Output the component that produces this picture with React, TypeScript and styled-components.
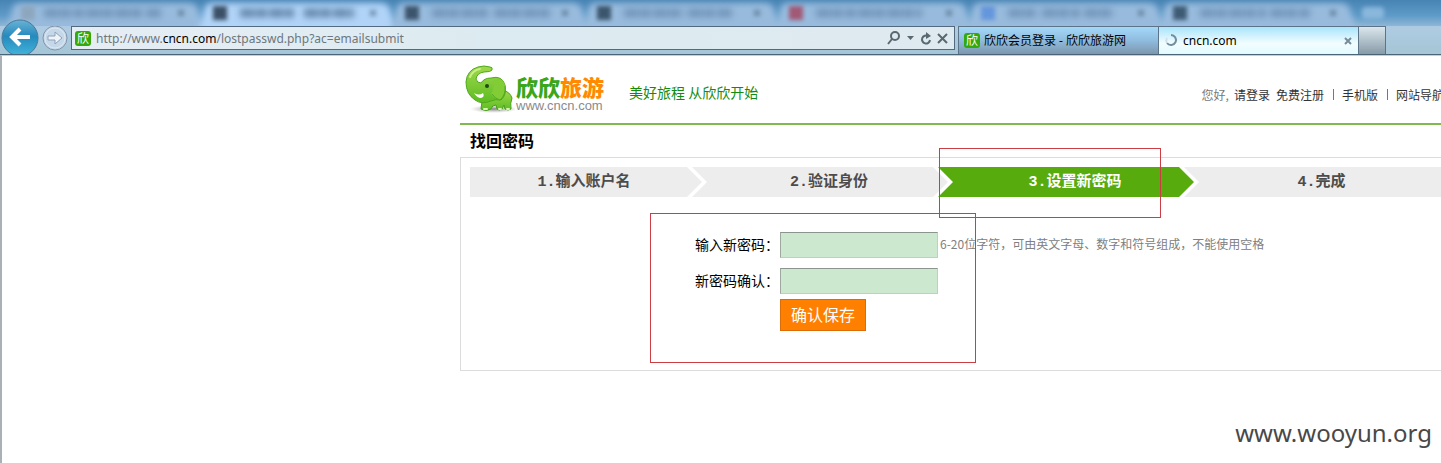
import React from "react";
import styled, { createGlobalStyle } from "styled-components";

const GlobalStyle = createGlobalStyle`
  *, *::before, *::after { box-sizing: border-box; }
  body {
    margin: 0;
    background: #fff;
    color: #000;
    font-family: "Noto Sans CJK SC", sans-serif;
    font-size: 14px;
  }
  button, input { font: inherit; }
  a { color: inherit; text-decoration: none; }
`;

const Screen = styled.div`
  display: flex;
  flex-direction: column;
  min-height: 100vh;
  overflow: hidden;
`;

/* ---------- browser chrome ---------- */

const Chrome = styled.header`
  background: linear-gradient(
    180deg,
    #5b8fba 0,
    #8fb6da 8px,
    #a3c2e2 20px,
    #aecbe3 28px,
    #a5c6d6 54px
  );
  border-bottom: 1px solid #4b6478;
`;

const WindowStrip = styled.div`
  display: flex;
  height: 26px;
  padding-left: 10px;
  overflow: hidden;
  background: linear-gradient(180deg, #4784b4, #5f9bc8 60%, #8fb6d6);
`;

const GhostTab = styled.svg`
  flex: 0 0 192px;
  height: 34px;
  overflow: visible;
`;

const NewGhostTab = styled.svg`
  flex: 1;
  height: 26px;
`;

const Toolbar = styled.div`
  display: flex;
  align-items: flex-start;
  height: 28px;
`;

const BackButton = styled.button`
  position: relative;
  flex: none;
  width: 38px;
  height: 35px;
  margin: -7px 3px 0 1px;
  padding: 0;
  border: 0;
  background: none;
  overflow: hidden;
`;

const ForwardButton = styled.button`
  flex: none;
  width: 26px;
  height: 26px;
  margin-right: 3px;
  padding: 0;
  border: 0;
  background: none;
`;

const AddressBar = styled.div`
  display: flex;
  flex: 1;
  align-items: center;
  height: 24px;
  margin-right: 3px;
  padding: 0 4px 0 3px;
  border: 1px solid #53697f;
  background: linear-gradient(90deg, #e6edf4, #dcebf1 50%, #dfeaf0);
`;

const Url = styled.div`
  flex: 1;
  margin-left: 5px;
  padding-top: 2px;
  color: #6d777d;
  font: 12px/20px "Noto Sans", sans-serif;
  white-space: nowrap;
  outline: 0;
`;

const Domain = styled.span`
  color: #000;
`;

const BarButton = styled.button<{ $width: number }>`
  display: flex;
  align-items: center;
  justify-content: center;
  width: ${(p) => p.$width}px;
  height: 20px;
  padding: 0;
  border: 0;
  background: none;
`;

const Tabs = styled.nav`
  display: flex;
  height: 28px;
  margin-right: 55px;
`;

const Tab = styled.div<{ $active?: boolean }>`
  display: flex;
  align-items: center;
  width: 200px;
  padding: 0 5px;
  border: 1px solid #5d7488;
  border-width: 1px 0 0 1px;
  background: ${(p) =>
    p.$active
      ? "linear-gradient(180deg, #a8e4fb, #f2fdff 60%, #e2fbff)"
      : "linear-gradient(180deg, #a4d8f8, #8fbcdf 50%, #7d97ac)"};
  font: 12px/20px "Noto Sans", "Noto Sans CJK SC", sans-serif;
`;

const TabLabel = styled.a`
  flex: 1;
  margin-left: 4px;
  white-space: nowrap;
`;

const NewTab = styled.button`
  width: 28px;
  padding: 0;
  border: 1px solid #5d7488;
  border-bottom: 0;
  background: linear-gradient(180deg, #dbe6ec, #869ba8);
`;

const SiteIcon = styled.span`
  flex: none;
  width: 16px;
  height: 15px;
  border-radius: 3px;
  background: #35a80c;
  color: #fff;
  font: 12px/14px "Noto Sans CJK SC", sans-serif;
  text-align: center;
`;

/* ---------- web page ---------- */

const Viewport = styled.div`
  flex: 1;
  padding-left: 458px;
  border-top: 1px solid #d8c5d6;
  border-left: 2px solid #a9b0b6;
`;

const SiteHeader = styled.div`
  display: flex;
  align-items: center;
  height: 69px;
  border-bottom: 2px solid #82b94f;
`;

const Brand = styled.a`
  display: flex;
  align-items: center;
  margin-left: 5px;
`;

const BrandText = styled.span`
  display: flex;
  flex-direction: column;
  margin-left: 1px;
  padding-top: 12px;
`;

const BrandName = styled.span`
  color: #3aa618;
  font-size: 22px;
  font-weight: 900;
  line-height: 20px;
`;

const Orange = styled.span`
  color: #ff8a00;
`;

const BrandUrl = styled.span`
  color: #8a8a8a;
  font: 13px/20px "Liberation Sans", sans-serif;
`;

const Slogan = styled.span`
  margin-left: 25px;
  padding-top: 4px;
  color: #118c11;
  line-height: 20px;
`;

const TopNav = styled.nav`
  display: flex;
  align-items: center;
  margin: 10px -3px 0 auto;
  color: #333;
  font-size: 12px;
  line-height: 20px;
  white-space: nowrap;
`;

const Greeting = styled.span`
  color: #777;
  margin-right: 5px;
`;

const NavLink = styled.a`
  & + & {
    margin-left: 6px;
  }
`;

const Divider = styled.span`
  width: 1px;
  height: 11px;
  margin: 0 8px 0 9px;
  background: #777;
`;

const PageTitle = styled.h1`
  margin: 0 0 0 10px;
  padding-bottom: 2px;
  font-size: 16px;
  font-weight: 700;
  line-height: 30px;
`;

const Panel = styled.main`
  position: relative;
  padding: 9px 0 39px 9px;
  border: 1px solid #dcdcdc;
  border-right: 0;
`;

const Steps = styled.ol`
  display: flex;
  margin: 0 0 35px;
  padding: 0;
  list-style: none;
`;

const Step = styled.li<{ $current?: boolean }>`
  flex: none;
  width: 256px;
  margin-left: -10px;
  padding: 2px 0 0 18px;
  background: ${(p) => (p.$current ? "#57ab0d" : "#ededed")};
  color: ${(p) => (p.$current ? "#fff" : "#4c4c4c")};
  clip-path: polygon(0 0, calc(100% - 15px) 0, 100% 50%, calc(100% - 15px) 100%, 0 100%, 15px 50%);
  font: 700 15px/28px "Liberation Mono", "Noto Sans CJK SC", monospace;
  text-align: center;

  &:first-child {
    width: 232px;
    margin-left: 0;
    padding: 2px 4px 0 0;
    clip-path: polygon(0 0, calc(100% - 15px) 0, 100% 50%, calc(100% - 15px) 100%, 0 100%);
  }

  &:last-child {
    flex: 1 0 256px;
    clip-path: polygon(0 0, 100% 0, 100% 100%, 0 100%, 15px 50%);
  }
`;

const Form = styled.form`
  display: grid;
  grid-template-columns: 310px 158px 1fr;
  row-gap: 10px;
  align-items: center;
`;

const Label = styled.label`
  padding: 0 1px 2px 0;
  line-height: 24px;
  text-align: right;
`;

const PasswordInput = styled.input`
  width: 100%;
  height: 26px;
  padding: 0 4px;
  border: 1px solid #c3cdc5;
  border-top-color: #8b948d;
  border-left-color: #9ea8a0;
  border-radius: 0;
  background: #cce8cf;
  outline: 0;
`;

const Hint = styled.span`
  margin-left: 2px;
  padding-bottom: 2px;
  color: #808080;
  font-size: 12px;
  line-height: 24px;
  white-space: nowrap;
`;

const SaveButton = styled.button`
  grid-column: 2;
  justify-self: start;
  height: 32px;
  margin-top: -5px;
  padding: 0 10px 2px;
  border: 1px solid #dc6c05;
  background: #ff8000;
  color: #fff;
  font-size: 16px;
  line-height: 28px;
`;

const Mark = styled.div<{ $x: number; $y: number; $w: number; $h: number }>`
  position: absolute;
  left: ${(p) => p.$x}px;
  top: ${(p) => p.$y}px;
  width: ${(p) => p.$w}px;
  height: ${(p) => p.$h}px;
  border: 1px solid #cb3e46;
  pointer-events: none;
`;

const Watermark = styled.footer`
  padding: 46px 9px 14px 0;
  color: #484848;
  font: 24px/32px "Noto Sans", sans-serif;
  text-align: right;
`;

/* ---------- drawings ---------- */

type Ghost = { icon: string; words: number[][]; active?: boolean };

const ghosts: Ghost[] = [
  { icon: "#8ba3b8", words: [[34, 40], [76, 58], [136, 16]] },
  { icon: "#27394e", words: [[38, 54], [102, 50]], active: true },
  { icon: "#2d4359", words: [[38, 56], [100, 56]] },
  { icon: "#2b4459", words: [[38, 60], [102, 44]] },
  { icon: "#a34863", words: [[38, 40], [80, 64]] },
  { icon: "#5c90dc", words: [[38, 30], [72, 38], [114, 30]] },
  { icon: "#2f4b62", words: [[38, 66], [108, 40]] },
];

const BackgroundTab = ({ icon, words, active }: Ghost) => (
  <GhostTab viewBox="0 0 192 34" aria-hidden="true">
    <path
      d="M-6 40 L3 7 Q5 3 10 3 H178 Q184 3 187 7 L198 40Z"
      fill={active ? "#b0d3f7" : "#98bbdd"}
      style={{ filter: "blur(3px)" }}
    />
    <rect x="11" y="6" width="14" height="14" fill={icon} opacity=".85" style={{ filter: "blur(2px)" }} />
    <g style={{ filter: "blur(3px)" }}>
      {words.map(([x, w]) => (
        <path
          key={x}
          d={`M${x} 13h${w}`}
          stroke="#486c92"
          strokeOpacity={active ? 0.7 : 0.45}
          strokeWidth="9"
          strokeDasharray="15 1 11 2"
        />
      ))}
    </g>
    <path
      d="m168 10 6 6m0-6-6 6"
      stroke="#49657f"
      strokeWidth="2"
      opacity=".7"
      style={{ filter: "blur(2px)" }}
    />
  </GhostTab>
);

const Elephant = () => (
  <svg width="50" height="50" viewBox="0 0 50 50" aria-hidden="true">
    <defs>
      <linearGradient id="skin" x1="0" y1="0" x2="0" y2="1">
        <stop offset="0" stopColor="#a0d94c" />
        <stop offset="1" stopColor="#5cbc22" />
      </linearGradient>
      <radialGradient id="shade">
        <stop offset="0" stopColor="#666" stopOpacity=".8" />
        <stop offset="1" stopColor="#999" stopOpacity="0" />
      </radialGradient>
    </defs>
    <ellipse cx="29" cy="44" rx="24" ry="4" fill="url(#shade)" />
    <path
      d="M16 30 Q18 36 16 44 Q21 47 26 44 Q27 40 31 40 L32 44 Q34 46 37 44 L39 40 L40 44 Q43 46 46 44 Q45 38 47 33 Q45 27 38 25Z"
      fill="url(#skin)"
      stroke="#459f18"
    />
    <path
      d="M25 2 Q28 2 27 5 Q26 7 19 7 Q12 8 11 14 Q12 18 16 18 Q19 13 26 13 Q37 10 40 20 Q42 30 36 35 Q30 34 26 36 Q17 40 10 35 Q1 29 1 17 Q2 5 13 2 Q19 0 25 2Z"
      fill="url(#skin)"
      stroke="#4fa91c"
    />
    <path d="M28 15 Q38 11 40 21 Q41 30 35 35 Q28 33 26 29 Q30 23 28 15" fill="#82cd36" />
    <path d="M27 29 Q30 34 35 35 Q41 30 40 21" fill="none" stroke="#55a822" />
    <path d="M9 28 Q14 31 18 28 Q20 32 16 33 Q12 33 9 28Z" fill="#fff" />
    <circle cx="22" cy="21" r="2" fill="#1f4a12" />
    <path d="M19 44h3M34 44h2M42 44h2" stroke="#d8f5ac" strokeWidth="2" strokeLinecap="round" />
    <path d="M5 12 Q8 5 15 4" fill="none" stroke="#ccef8b" strokeWidth="2" strokeLinecap="round" />
  </svg>
);

const App = () => (
  <Screen>
    <GlobalStyle />
    <Chrome>
      <WindowStrip>
        {ghosts.map((ghost, i) => (
          <BackgroundTab key={i} {...ghost} />
        ))}
        <NewGhostTab aria-hidden="true">
          <rect x="8" y="7" width="22" height="12" rx="4" fill="#8ab7dc" style={{ filter: "blur(2px)" }} />
        </NewGhostTab>
      </WindowStrip>
      <Toolbar>
        <BackButton aria-label="后退">
          <svg width="38" height="38" viewBox="0 0 38 38">
            <defs>
              <linearGradient id="orb" x1="0" y1="0" x2="0" y2="1">
                <stop offset="0" stopColor="#69b3d5" />
                <stop offset=".45" stopColor="#258abd" />
                <stop offset="1" stopColor="#43b5dc" />
              </linearGradient>
            </defs>
            <circle cx="19" cy="19" r="18" fill="url(#orb)" stroke="#4d7897" />
            <path d="M29 18H12M19 10l-8 8 8 8" fill="none" stroke="#fff" strokeWidth="4" />
          </svg>
        </BackButton>
        <ForwardButton aria-label="前进">
          <svg width="26" height="26" viewBox="0 0 26 26">
            <circle cx="13" cy="12" r="12" fill="#c5d8e9" stroke="#8294ab" />
            <circle cx="13" cy="12" r="10" fill="none" stroke="#dce8f3" />
            <path
              d="M6 10h7V6l7 6-7 6v-4H6z"
              fill="#edf3f8"
              stroke="#8fa2b8"
              strokeLinejoin="round"
            />
          </svg>
        </ForwardButton>
        <AddressBar>
          <SiteIcon>欣</SiteIcon>
          <Url role="textbox" aria-label="地址" contentEditable suppressContentEditableWarning spellCheck={false}>
            http://www.<Domain>cncn.com</Domain>/lostpasswd.php?ac=emailsubmit
          </Url>
          <BarButton $width={16} aria-label="搜索">
            <svg width="14" height="14" viewBox="0 0 14 14" fill="none" stroke="#5a6870" strokeWidth="2">
              <circle cx="8" cy="5" r="4" />
              <path d="m5 8-4 5" />
            </svg>
          </BarButton>
          <BarButton $width={16} aria-label="历史记录">
            <svg width="7" height="4" viewBox="0 0 7 4" fill="#5a6870">
              <path d="M0 0h7L3.500 4z" />
            </svg>
          </BarButton>
          <BarButton $width={16} aria-label="刷新">
            <svg width="12" height="13" viewBox="0 0 12 13">
              <path d="M8 4A4 4 0 1 0 10 8" fill="none" stroke="#5a6870" strokeWidth="2" />
              <path d="M6 0l5 4-5 3z" fill="#5a6870" />
            </svg>
          </BarButton>
          <BarButton $width={16} aria-label="停止">
            <svg width="11" height="11" viewBox="0 0 11 11" stroke="#5a6870" strokeWidth="2">
              <path d="m1 1 9 9M10 1l-9 9" />
            </svg>
          </BarButton>
        </AddressBar>
        <Tabs aria-label="标签页">
          <Tab>
            <SiteIcon>欣</SiteIcon>
            <TabLabel href="#login">欣欣会员登录 - 欣欣旅游网</TabLabel>
          </Tab>
          <Tab $active>
            <svg width="15" height="15" viewBox="0 0 15 15" fill="none" stroke="#718e9f" strokeWidth="2">
              <path d="M7 2a5 5 0 1 1-4 8" />
              <path d="M3 10a5 5 0 0 1 0-5" stroke="#cfe1e8" />
            </svg>
            <TabLabel href="#cncn">cncn.com</TabLabel>
            <BarButton $width={10} aria-label="关闭标签页">
              <svg width="8" height="8" viewBox="0 0 8 8" stroke="#758c99" strokeWidth="2">
                <path d="m1 1 6 6M7 1 1 7" />
              </svg>
            </BarButton>
          </Tab>
          <NewTab aria-label="新建标签页" />
        </Tabs>
      </Toolbar>
    </Chrome>

    <Viewport>
      <SiteHeader>
        <Brand href="#home">
          <Elephant />
          <BrandText>
            <BrandName>
              欣欣<Orange>旅游</Orange>
            </BrandName>
            <BrandUrl>www.cncn.com</BrandUrl>
          </BrandText>
        </Brand>
        <Slogan>美好旅程 从欣欣开始</Slogan>
        <TopNav>
          <Greeting>您好,</Greeting>
          <NavLink href="#login">请登录</NavLink>
          <NavLink href="#register">免费注册</NavLink>
          <Divider />
          <NavLink href="#mobile">手机版</NavLink>
          <Divider />
          <NavLink href="#sitemap">网站导航</NavLink>
        </TopNav>
      </SiteHeader>

      <PageTitle>找回密码</PageTitle>

      <Panel>
        <Steps>
          <Step>1.输入账户名</Step>
          <Step>2.验证身份</Step>
          <Step $current aria-current="step">
            3.设置新密码
          </Step>
          <Step>4.完成</Step>
        </Steps>
        <Form onSubmit={(e) => e.preventDefault()}>
          <Label htmlFor="password">输入新密码：</Label>
          <PasswordInput id="password" type="password" aria-describedby="password-hint" />
          <Hint id="password-hint">6-20位字符，可由英文字母、数字和符号组成，不能使用空格</Hint>
          <Label htmlFor="confirm">新密码确认：</Label>
          <PasswordInput id="confirm" type="password" />
          <SaveButton type="submit">确认保存</SaveButton>
        </Form>
        <Mark $x={478} $y={-10} $w={222} $h={70} />
        <Mark $x={189} $y={55} $w={326} $h={150} />
      </Panel>
      <Watermark>www.wooyun.org</Watermark>
    </Viewport>
  </Screen>
);

export default App;
